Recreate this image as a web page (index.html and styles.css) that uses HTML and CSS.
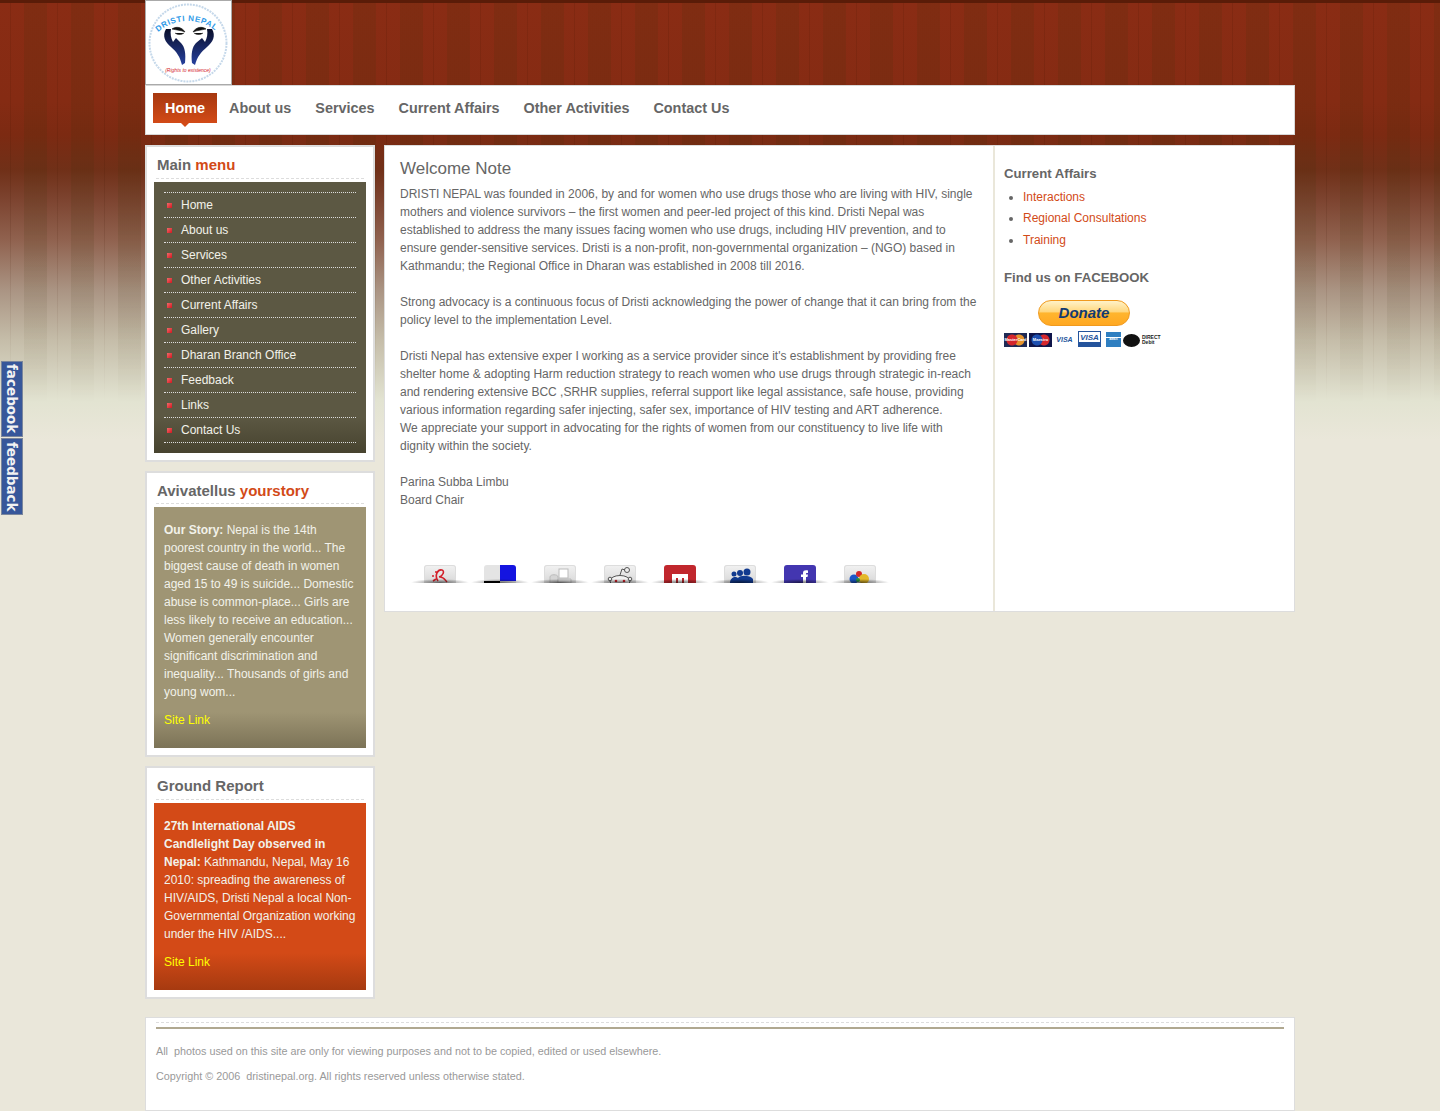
FILE: index.html
```html
<!DOCTYPE html>
<html lang="en">
<head>
  <meta charset="UTF-8">
  <title>Dristi Nepal</title>
  <link rel="stylesheet" href="styles.css">
</head>
<body>

<!-- side tabs -->
<a class="side-tab tab-fb" href="#">facebook</a>
<a class="side-tab tab-feedback" href="#">feedback</a>

<div class="wrapper">

  <div class="logo">
    <svg width="82" height="82" viewBox="0 0 82 82">
      <circle cx="41" cy="41" r="38.5" fill="#fff" stroke="#c5d8ea" stroke-width="2" stroke-dasharray="2 1"/>
      <defs>
        <path id="logoArc" d="M11 30 A45 45 0 0 1 70 30"/>
        <linearGradient id="handFill" x1="0" y1="0" x2="0" y2="1">
          <stop offset="0" stop-color="#0a0f2a"/>
          <stop offset="1" stop-color="#26409e"/>
        </linearGradient>
      </defs>
      <text class="logo-name"><textPath href="#logoArc" startOffset="0">DRISTI NEPAL</textPath></text>
      <path d="M19 27 C15 34 18 40 24 45 C30 50 33 55 35 63 L38 61 C39 52 38 45 34 41 L29 36 L26 40 C24 36 23 32 24 27 Z" fill="url(#handFill)"/>
      <path d="M65 27 C69 34 66 40 60 45 C54 50 50 55 48 63 L45 61 C44 52 45 45 49 41 L55 36 L58 40 C60 36 61 32 60 27 Z" fill="url(#handFill)"/>
      <path d="M25 27 C29 24 35 25 38 30 C33 28 29 28 25 27 Z M28 31 C31 33 34 33 37 31" fill="#111" stroke="#111" stroke-width=".6"/>
      <path d="M59 27 C55 24 49 25 46 30 C51 28 55 28 59 27 Z M56 31 C53 33 50 33 47 31" fill="#111" stroke="#111" stroke-width=".6"/>
      <text class="logo-tag" x="41" y="70" text-anchor="middle">(Rights to existence)</text>
    </svg>
  </div>

  <div class="nav">
    <a class="active" href="#">Home</a>
    <a href="#">About us</a>
    <a href="#">Services</a>
    <a href="#">Current Affairs</a>
    <a href="#">Other Activities</a>
    <a href="#">Contact Us</a>
  </div>

  <div class="columns">

    <div class="sidebar">
      <div class="box box-menu">
        <h3>Main <span>menu</span></h3>
        <div class="panel panel-dark">
          <ul class="side-menu">
            <li><a href="#">Home</a></li>
            <li><a href="#">About us</a></li>
            <li><a href="#">Services</a></li>
            <li><a href="#">Other Activities</a></li>
            <li><a href="#">Current Affairs</a></li>
            <li><a href="#">Gallery</a></li>
            <li><a href="#">Dharan Branch Office</a></li>
            <li><a href="#">Feedback</a></li>
            <li><a href="#">Links</a></li>
            <li><a href="#">Contact Us</a></li>
          </ul>
        </div>
      </div>

      <div class="box box-story">
        <h3>Avivatellus <span>yourstory</span></h3>
        <div class="panel panel-tan">
          <p><strong>Our Story:</strong> Nepal is the 14th poorest country in the world... The biggest cause of death in women aged 15 to 49 is suicide... Domestic abuse is common-place... Girls are less likely to receive an education... Women generally encounter significant discrimination and inequality... Thousands of girls and young wom...</p>
          <a class="site-link" href="#">Site Link</a>
        </div>
      </div>

      <div class="box box-report">
        <h3>Ground Report</h3>
        <div class="panel panel-orange">
          <p><strong>27th International AIDS Candlelight Day observed in Nepal:</strong> Kathmandu, Nepal, May 16 2010: spreading the awareness of HIV/AIDS, Dristi Nepal a local Non-Governmental Organization working under the HIV /AIDS....</p>
          <a class="site-link" href="#">Site Link</a>
        </div>
      </div>
    </div>

    <div class="content">
      <div class="main-col">
        <h2>Welcome Note</h2>
        <p>DRISTI NEPAL was founded in 2006, by and for women who use drugs those who are living with HIV, single mothers and violence survivors – the first women and peer-led project of this kind. Dristi Nepal was established to address the many issues facing women who use drugs, including HIV prevention, and to ensure gender-sensitive services. Dristi is a non-profit, non-governmental organization – (NGO) based in Kathmandu; the Regional Office in Dharan was established in 2008 till 2016.<br><br>
        Strong advocacy is a continuous focus of Dristi acknowledging the power of change that it can bring from the policy level to the implementation Level.<br><br>
        Dristi Nepal has extensive exper I working as a service provider since it's establishment by providing free shelter home &amp; adopting Harm reduction strategy to reach women who use drugs through strategic in-reach and rendering extensive BCC ,SRHR supplies, referral support like legal assistance, safe house, providing various information regarding safer injecting, safer sex, importance of HIV testing and ART adherence.<br>
        We appreciate your support in advocating for the rights of women from our constituency to live life with dignity within the society.<br><br>
        Parina Subba Limbu<br>
        Board Chair</p>

        <div class="share">
          <a class="share-icon" href="#"><svg width="32" height="18" viewBox="0 0 32 18"><path d="M14 16 C10 10 14 4 18 5 C21 6 19 11 15 12 M16 12 C20 12 21 15 23 17 M9 16 L12 14 M8 11 h2 M11 7 h2" fill="none" stroke="#d3202a" stroke-width="1.6"/></svg></a>
          <a class="share-icon icon-delicious" href="#"><i></i></a>
          <a class="share-icon" href="#"><svg width="32" height="18" viewBox="0 0 32 18"><path d="M6 18 V12 C6 9 14 9 14 12 V18 Z" fill="#d5d5d5" stroke="#bbb"/><rect x="15" y="4" width="9" height="9" fill="#fff" stroke="#bbb"/><path d="M14 14 H27 V18 H14 Z" fill="#e3e3e3" stroke="#bbb"/></svg></a>
          <a class="share-icon" href="#"><svg width="32" height="18" viewBox="0 0 32 18"><ellipse cx="16" cy="16" rx="10" ry="5.500" fill="#f2f2f2" stroke="#555"/><circle cx="6" cy="14" r="1.800" fill="#eee" stroke="#555"/><circle cx="26" cy="14" r="1.800" fill="#eee" stroke="#555"/><circle cx="23" cy="5" r="2.500" fill="#eee" stroke="#555"/><path d="M16 10 L18 4 L21 5" fill="none" stroke="#555"/><circle cx="12" cy="16" r="1.300" fill="#d3202a"/><circle cx="20" cy="16" r="1.300" fill="#d3202a"/></svg></a>
          <a class="share-icon icon-mixx" href="#"><svg width="32" height="18" viewBox="0 0 32 18"><path d="M8 18 V9 H24 V18 H20 V13 H18 V18 H14 V13 H12 V18 Z" fill="#fff"/></svg></a>
          <a class="share-icon" href="#"><svg width="32" height="18" viewBox="0 0 32 18"><g fill="#113a8f"><circle cx="10" cy="9" r="2.500"/><circle cx="16" cy="8" r="3"/><circle cx="23" cy="7" r="3.500"/><path d="M6 18 C6 12 12 11 14 13 C16 10 26 10 29 14 V18 Z"/></g></svg></a>
          <a class="share-icon icon-fb" href="#"><svg width="32" height="18" viewBox="0 0 32 18"><path d="M19 18 V12 H17 V9.500 H19 V8 C19 5.500 21 5 24 5.500 V8 C22 7.800 22 8 22 9.500 H24 L23.500 12 H22 V18 Z" fill="#fff"/></svg></a>
          <a class="share-icon" href="#"><svg width="32" height="18" viewBox="0 0 32 18"><circle cx="10" cy="14" r="4.500" fill="#1c57c8"/><circle cx="15" cy="9" r="3" fill="#d3282a"/><circle cx="20" cy="14" r="5" fill="#e4b92a"/><circle cx="14" cy="15" r="2" fill="#2f9a3a"/></svg></a>
        </div>
      </div>

      <div class="right-col">
        <h4>Current Affairs</h4>
        <ul class="affairs">
          <li><a href="#">Interactions</a></li>
          <li><a href="#">Regional Consultations</a></li>
          <li><a href="#">Training</a></li>
        </ul>
        <h4 class="fb-title">Find us on FACEBOOK</h4>
        <a class="donate" href="#">Donate</a>
        <div class="cards">
          <span class="card card-mc">MasterCard</span>
          <span class="card card-maestro">Maestro</span>
          <span class="card card-visa">VISA</span>
          <span class="card card-visa2">VISA</span>
          <span class="card card-amex">AMEX</span>
          <span class="card card-debit"><i></i>DIRECT Debit</span>
        </div>
      </div>
    </div>

  </div>

  <div class="footer">
    <p>All&nbsp; photos used on this site are only for viewing purposes and not to be copied, edited or used elsewhere.</p>
    <p>Copyright © 2006&nbsp; dristinepal.org. All rights reserved unless otherwise stated.</p>
  </div>

</div>

</body>
</html>
```

FILE: styles.css
```css
* {
  box-sizing: border-box;
}

body {
  margin: 0;
  font-family: "Liberation Sans", Arial, sans-serif;
  font-size: 12px;
  line-height: 18px;
  color: #666;
  position: relative;
  background-color: #eae7da;
  background-image: linear-gradient(#5a1c08 0, #5a1c08 3px, #8a2c14 3px, #852b13 100px, #7c2a12 135px, #703018 170px, #7d4430 200px, #90624f 240px, #aa9483 290px, #c5bda9 340px, #e2e3d1 400px, #eae7da 440px);
  background-repeat: no-repeat;
  background-size: 100% 440px;
}

/* wallpaper stripes, they fade out into the page colour */
body:before {
  content: "";
  position: absolute;
  top: 3px;
  left: 0;
  right: 0;
  height: 400px;
  z-index: -1;
  background:
    repeating-linear-gradient(90deg, transparent 0, transparent 10px, rgba(60,20,0,0.12) 10px, rgba(60,20,0,0.12) 11px, transparent 11px, transparent 47px),
    repeating-linear-gradient(90deg, transparent 0, transparent 24px, rgba(60,50,10,0.13) 24px, rgba(60,50,10,0.13) 47px);
  -webkit-mask-image: linear-gradient(#000 0, #000 230px, transparent 400px);
  mask-image: linear-gradient(#000 0, #000 230px, transparent 400px);
}

a {
  text-decoration: none;
}

.wrapper {
  width: 1150px;
  margin-left: 145px;
}

/* logo */
.logo {
  width: 87px;
  height: 85px;
  background: #fff;
  border: 1px solid #aaa;
  padding: 1px 0 0 1px;
}

.logo svg {
  display: block;
}

.logo-name {
  font-size: 8px;
  font-weight: bold;
  letter-spacing: .6px;
  fill: #2f9be8;
}

.logo-tag {
  font-size: 5px;
  font-style: italic;
  fill: #d3202a;
}

/* top nav */
.nav {
  height: 50px;
  background: #fff;
  border: 1px solid #d8d8d8;
  padding: 7px 0 0 7px;
  display: flex;
  align-items: flex-start;
}

.nav a {
  display: block;
  height: 30px;
  padding: 0 12px;
  font-size: 14.4px;
  font-weight: bold;
  line-height: 30px;
  color: #666;
  position: relative;
}

.nav a.active {
  color: #fff;
  background: linear-gradient(#a63810, #d24a17);
}

.nav a.active:after {
  content: "";
  position: absolute;
  left: 50%;
  top: 30px;
  margin-left: -4px;
  border: 4px solid transparent;
  border-top-color: #d24a17;
  border-bottom: 0;
}

/* columns */
.columns {
  display: flex;
  align-items: flex-start;
  gap: 9px;
  margin-top: 10px;
}

.sidebar {
  width: 230px;
  flex: none;
  display: flex;
  flex-direction: column;
}

.box {
  background: #fff;
  border: 2px solid #ddd;
  padding: 0 7px 7px;
}

.box-story,
.box-report {
  margin-top: 9px;
}

.box h3 {
  margin: 0 2px 3px;
  padding: 0 1px;
  height: 32px;
  font-size: 15px;
  line-height: 36px;
  font-weight: bold;
  color: #666;
  border-bottom: 1px dashed #ddd;
}

.box-story h3 {
  height: 31px;
}

.box h3 span {
  color: #d24a17;
}

.panel {
  padding: 14px 10px 19px;
  color: #f2f2ea;
}

.panel p {
  margin: 0 0 10px;
}

.panel-dark {
  background: linear-gradient(#5c5843 0, #5c5843 235px, #47432f 100%);
  padding: 10px;
}

.panel-tan {
  background: linear-gradient(#9f9574 0, #9f9574 205px, #7c7357 100%);
}

.panel-orange {
  background: linear-gradient(#d34a17 0, #d34a17 150px, #a63a10 100%);
}

.site-link {
  color: #ff0;
  display: block;
}

.side-menu {
  list-style: none;
  margin: 0;
  padding: 0;
  border-top: 1px dotted #ddd;
}

.side-menu li {
  height: 25px;
  border-bottom: 1px dotted #ddd;
  padding-left: 17px;
  line-height: 24px;
  position: relative;
}

.side-menu li:before {
  content: "";
  position: absolute;
  left: 3px;
  top: 10px;
  width: 5px;
  height: 5px;
  background: linear-gradient(135deg, #f26a6a, #d3151f);
}

.side-menu a {
  color: #f2f2ea;
}

/* main content */
.content {
  width: 911px;
  height: 467px;
  background: #fff;
  border: 1px solid #ddd;
  display: flex;
}

.main-col {
  width: 610px;
  padding: 12px 14px 0 15px;
  border-right: 2px solid #eae7da;
}

.main-col h2 {
  margin: 0 0 5px;
  font-size: 17px;
  font-weight: normal;
  line-height: 22px;
  color: #666;
}

.main-col p {
  margin: 0;
}

.share {
  display: flex;
  margin: 56px 0 0 10px;
  height: 18px;
  overflow: hidden;
}

.share-icon {
  width: 60px;
  height: 18px;
  flex: none;
  position: relative;
  padding-left: 14px;
  display: block;
}

.share-icon svg {
  display: block;
  width: 32px;
  height: 18px;
  background: linear-gradient(#f2f2f2, #d8d8d8);
  border-radius: 3px 3px 0 0;
  box-shadow: inset 0 0 0 1px #ddd;
}

.share-icon:after {
  content: "";
  position: absolute;
  left: 1px;
  right: 1px;
  bottom: -3px;
  height: 7px;
  background: radial-gradient(closest-side, rgba(0,0,0,0.55), rgba(0,0,0,0));
}

.icon-mixx svg {
  background: #c1272d;
  box-shadow: none;
}

.icon-fb svg {
  background: #4336b0;
  box-shadow: none;
}

.icon-delicious i {
  display: block;
  width: 32px;
  height: 18px;
  border-radius: 3px 3px 0 0;
  background:
    linear-gradient(#1414e0, #1414e0) right top / 16px 16px no-repeat,
    linear-gradient(#000, #000) left bottom / 16px 2px no-repeat,
    #e4e4e4;
}

/* right column */
.right-col {
  flex: 1;
  padding: 19px 9px 0;
}

.right-col h4 {
  margin: 0;
  font-size: 13.2px;
  line-height: 18px;
  font-weight: bold;
  color: #666;
}

.affairs {
  margin: 4.700px 0 0;
  padding: 0 0 0 19px;
}

.affairs li {
  height: 21.500px;
  line-height: 18px;
}

.affairs a {
  color: #d24a17;
}

.right-col .fb-title {
  margin-top: 17px;
}

.donate {
  display: block;
  width: 92px;
  height: 26px;
  margin: 13px 0 0 34px;
  border: 1px solid #f09a1e;
  border-radius: 13px;
  background: linear-gradient(#fff2c8 0, #ffd77e 45%, #ffb52e 50%, #ffa822 100%);
  color: #123a72;
  font-size: 15px;
  font-weight: bold;
  font-style: italic;
  line-height: 24px;
  text-align: center;
}

.cards {
  display: flex;
  height: 16px;
  margin-top: 5px;
  align-items: flex-end;
}

.card {
  display: block;
  height: 14px;
  width: 23px;
  flex: none;
  font-size: 4px;
  line-height: 14px;
  text-align: center;
  color: #fff;
  font-weight: bold;
  overflow: hidden;
  white-space: nowrap;
}

.card-mc {
  background: radial-gradient(circle at 8px 7px, #d5262c 0, #d5262c 5px, transparent 6px), radial-gradient(circle at 15px 7px, #e8952c 0, #e8952c 5px, transparent 6px), #1f2a55;
}

.card-maestro {
  margin-left: 2px;
  background: radial-gradient(circle at 8px 7px, #1d4fb0 0, #1d4fb0 5px, transparent 6px), radial-gradient(circle at 15px 7px, #d5262c 0, #d5262c 5px, transparent 6px), #10154a;
}

.card-visa {
  width: 19px;
  margin-left: 3px;
  background: #fff;
  color: #24549c;
  font-size: 7px;
  font-style: italic;
}

.card-visa2 {
  height: 16px;
  width: 23px;
  margin-left: 4px;
  background: linear-gradient(#fff 0, #fff 70%, #24549c 70%);
  border: 1px solid #24549c;
  color: #24549c;
  font-size: 8px;
  font-style: italic;
  line-height: 11px;
}

.card-amex {
  width: 15px;
  height: 15px;
  margin-left: 5px;
  background: linear-gradient(#2f7fc1 0, #2f7fc1 35%, #fff 35%, #fff 42%, #2f7fc1 42%);
  font-size: 3px;
}

.card-debit {
  width: 41px;
  margin-left: 2px;
  display: flex;
  align-items: center;
  gap: 2px;
  color: #222;
  font-size: 5px;
  line-height: 5px;
  white-space: normal;
  text-align: left;
}

.card-debit i {
  display: block;
  width: 17px;
  height: 13px;
  flex: none;
  background: #111;
  border-radius: 50%;
}

/* footer */
.footer {
  height: 94px;
  margin-top: 18px;
  background: #fff;
  border: 1px solid #ddd;
  padding: 9px 10px 0;
  position: relative;
  font-size: 10.8px;
  color: #999;
}

.footer:before {
  content: "";
  display: block;
  height: 2px;
  margin-top: -5px;
  border-top: 1px dashed #ddd;
}

.footer:after {
  content: "";
  position: absolute;
  left: 10px;
  right: 10px;
  top: 9px;
  height: 2px;
  background: #b0a890;
}

.footer p {
  margin: 0;
  line-height: 25px;
}

.footer p:first-of-type {
  margin-top: 14px;
}

/* side tabs */
.side-tab {
  position: absolute;
  left: 1px;
  width: 22px;
  background: #37579a;
  border: 1px solid #7a869c;
  color: #f2f2f2;
  font-family: "DejaVu Sans", sans-serif;
  font-size: 13.5px;
  font-weight: bold;
  line-height: 20px;
  writing-mode: vertical-rl;
  text-align: center;
}

.tab-fb {
  top: 361px;
  height: 76px;
}

.tab-feedback {
  top: 438px;
  height: 77px;
}
```
